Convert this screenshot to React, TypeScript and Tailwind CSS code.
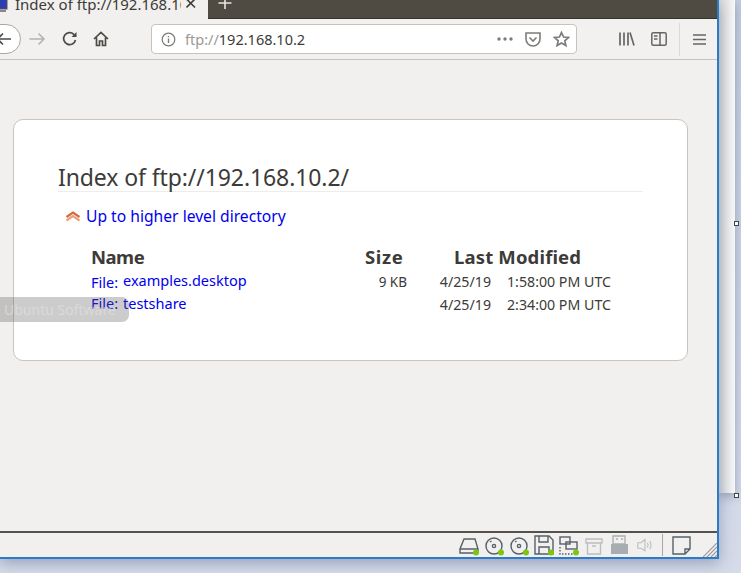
import React from "react";

function Dot() {
  return <circle cx="17" cy="17.5" r="3" fill="#7ec510" stroke="none" />;
}

function Status({ children, w = 20, className = "" }: { children: React.ReactNode; w?: number; className?: string }) {
  return (
    <svg width={w} height="21" viewBox="0 0 20 21" fill="none" stroke="#56606a" strokeWidth="1.4" className={`shrink-0 ${className}`}>
      {children}
    </svg>
  );
}

function Row({ name, size, date, time, fileClass }: { name: string; size: string; date: string; time: string; fileClass: string }) {
  return (
    <div className="flex items-start h-[23px] text-[14.2px] leading-[20px]">
      <div className="w-[281px] text-[#0000ee] flex shrink-0">
        <span className={`text-[14.5px] leading-[20px] w-[32px] shrink-0 ${fileClass}`}>File:</span>
        <span className="-mt-[2px] text-[14.5px]">{name}</span>
      </div>
      <div className="w-[35px] text-right text-[#3c3b37] text-[13.5px] shrink-0">{size}</div>
      <div className="w-[84px] text-right text-[#3c3b37] shrink-0">{date}</div>
      <div className="ml-[16px] text-[#3c3b37] whitespace-nowrap">{time}</div>
    </div>
  );
}

export default function App() {
  return (
    <div className="relative w-[741px] h-[573px] overflow-hidden flex items-start bg-gradient-to-b from-[#c2cce0] to-[#d5dbe9] font-['Noto_Sans','Open_Sans',sans-serif]">
      {/* Browser window */}
      <div className="relative z-10 w-[719px] h-[559px] shrink-0 flex flex-col border-r-2 border-b-2 border-[#2a7bc8] shadow-[0_4px_14px_rgba(70,90,130,0.45)]">
        {/* Tab strip */}
        <div className="h-[19px] shrink-0 flex bg-[#4f4b43] border-b border-[#33312c]">
          <div className="w-[208px] h-[19px] shrink-0 bg-[#f1f0ee] flex items-end overflow-hidden relative">
            <svg width="9" height="14" viewBox="0 0 9 14" className="absolute left-0 top-0">
              <rect x="-6" y="-2" width="13" height="11" fill="#2d3fb0" stroke="#555" />
              <rect x="0" y="10" width="6" height="2" fill="#888" />
            </svg>
            <span className="absolute left-[15px] -top-[8px] text-[15px] leading-[24px] text-[#3c3b37] whitespace-nowrap w-[166px] overflow-hidden">Index of ftp://192.168.10.2</span>
            <svg width="10" height="10" viewBox="0 0 10 10" className="absolute left-[186px] top-0" stroke="#3c3b37" strokeWidth="1.6">
              <path d="M0.5 -1 L9 7.5 M9 -1 L0.5 7.5" />
            </svg>
          </div>
          <svg width="14" height="14" viewBox="0 0 14 14" className="ml-[10px]" stroke="#e8e6e1" strokeWidth="1.6">
            <path d="M7 -4 V9 M0.5 3 H13.5" />
          </svg>
        </div>

        {/* Toolbar */}
        <div className="h-[41px] shrink-0 bg-[#f2f1ef] border-b border-[#c6c3be] flex items-center relative">
          <div className="w-[42px] h-[30px] -ml-[21px] shrink-0 rounded-full bg-white border border-[#a9a7a2] flex items-center justify-end pr-[8px]">
            <svg width="16" height="14" viewBox="0 0 16 14" fill="none" stroke="#4c4b48" strokeWidth="1.6">
              <path d="M15 7 H1.5 M7 1.5 L1.5 7 L7 12.5" />
            </svg>
          </div>
          <svg width="17" height="14" viewBox="0 0 17 14" fill="none" stroke="#b5b3af" strokeWidth="1.6" className="ml-[8px] shrink-0">
            <path d="M0.5 7 H15 M9.5 1.5 L15 7 L9.5 12.5" />
          </svg>
          <svg width="16" height="16" viewBox="0 0 16 16" fill="none" stroke="#4c4b48" strokeWidth="1.7" className="ml-[16px] shrink-0">
            <path d="M13.5 9 A6 6 0 1 1 11.8 3.3 L14 5.2" />
            <path d="M14.5 1 V6 H9.5" fill="#4c4b48" stroke="none" />
          </svg>
          <svg width="16" height="16" viewBox="0 0 16 16" fill="none" stroke="#4c4b48" strokeWidth="1.7" className="ml-[15px] shrink-0">
            <path d="M1 8 L8 1.5 L15 8 M3.5 6.5 V14.5 H6.5 V10 H9.5 V14.5 H12.5 V6.5" />
          </svg>
          {/* URL bar */}
          <div className="ml-[42px] w-[426px] h-[30px] shrink-0 bg-white border border-[#c6c3be] rounded-[4px] flex items-center">
            <svg width="15" height="15" viewBox="0 0 15 15" fill="none" stroke="#7d7c79" className="ml-[9px] shrink-0">
              <circle cx="7.5" cy="7.5" r="6.3" strokeWidth="1.2" />
              <path d="M7.5 6.5 V11 M7.5 4 V5.2" strokeWidth="1.4" />
            </svg>
            <span className="ml-[9px] text-[14.5px] leading-[20px] text-[#9a9995] whitespace-nowrap">ftp://<span className="text-[#3c3b37]">192.168.10.2</span></span>
            <div className="flex-1" />
            <svg width="16" height="4" viewBox="0 0 16 4" fill="#7d7c79" className="shrink-0">
              <circle cx="2" cy="2" r="1.7" /><circle cx="8" cy="2" r="1.7" /><circle cx="14" cy="2" r="1.7" />
            </svg>
            <svg width="16" height="15" viewBox="0 0 16 15" fill="none" stroke="#7d7c79" strokeWidth="1.6" className="ml-[12px] shrink-0">
              <path d="M1 1 H15 V7 A7 7 0 0 1 1 7 Z M4.5 5.5 L8 9 L11.5 5.5" />
            </svg>
            <svg width="17" height="16" viewBox="0 0 17 16" fill="none" stroke="#7d7c79" strokeWidth="1.7" className="ml-[12px] mr-[6px] shrink-0">
              <path d="M8.5 1.5 L10.6 6 L15.5 6.5 L11.8 9.8 L12.9 14.6 L8.5 12.1 L4.1 14.6 L5.2 9.8 L1.5 6.5 L6.4 6 Z" />
            </svg>
          </div>
          <svg width="16" height="14" viewBox="0 0 16 14" fill="none" stroke="#666" strokeWidth="1.7" className="ml-[42px] shrink-0">
            <path d="M1 0.5 V13.5 M5 0.5 V13.5 M9 0.5 V13.5 M11 0.5 L15 13.5" />
          </svg>
          <svg width="16" height="14" viewBox="0 0 16 14" fill="none" stroke="#666" strokeWidth="1.5" className="ml-[16px] shrink-0">
            <rect x="0.8" y="0.8" width="14.4" height="12.4" rx="1.5" />
            <path d="M9 1 V13 M3 4 H6.5 M3 7 H6.5" />
          </svg>
          <div className="w-px h-[33px] bg-[#dcdad6] ml-[12px] shrink-0" />
          <svg width="13" height="11" viewBox="0 0 13 11" stroke="#666" strokeWidth="1.6" className="ml-[13px] shrink-0">
            <path d="M0 1 H13 M0 5.5 H13 M0 10 H13" />
          </svg>
        </div>

        {/* Page */}
        <div className="flex-1 min-h-0 bg-[#f1f0ee] pl-[13px] pt-[59px] border-b-2 border-[#53524f]">
          <div className="w-[675px] h-[242px] bg-white border border-[#c7c5c1] rounded-[10px] pl-[44px] pt-[40px]">
            <h1 className="w-[585px] h-[32px] border-b border-[#eeedeb] text-[23px] leading-[34px] text-[#3c3b37] tracking-[-0.1px] whitespace-nowrap">Index of ftp://192.168.10.2/</h1>
            <div className="flex items-center ml-[7px] mt-[13px] h-[22px]">
              <svg width="16" height="11" viewBox="0 0 16 11" fill="none" stroke="#d9693a" strokeWidth="2.2" className="shrink-0">
                <path d="M1.5 9.5 L8 5 L14.5 9.5" stroke="#e9a27e" />
                <path d="M1.5 6 L8 1.5 L14.5 6" />
              </svg>
              <span className="ml-[5px] text-[15.65px] leading-[22px] text-[#0000ee] whitespace-nowrap">Up to higher level directory</span>
            </div>
            <div className="ml-[33px] mt-[18px]">
              <div className="flex items-center h-[24px] text-[18.5px] leading-[24px] font-bold text-[#3c3b37] whitespace-nowrap">
                <div className="w-[274px] shrink-0 tracking-[-0.5px]">Name</div>
                <div className="w-[89px] shrink-0 tracking-[0.6px]">Size</div>
                <div className="tracking-[0.15px]">Last Modified</div>
              </div>
              <div className="mt-[3px]">
                <Row name="examples.desktop" size="9 KB" date="4/25/19" time="1:58:00 PM UTC" fileClass="mt-0" />
                <Row name="testshare" size="" date="4/25/19" time="2:34:00 PM UTC" fileClass="-mt-[2px]" />
              </div>
            </div>
          </div>
        </div>

        {/* Status bar */}
        <div className="h-[24px] shrink-0 bg-[#f1f0ee] flex items-center justify-end relative pr-[26px] gap-[5px]">
          <Status>
            <path d="M5 4 H16 L19 14 V18 H1 V14 Z M1 14 H19" />
            <Dot />
          </Status>
          <Status>
            <circle cx="10" cy="11" r="8" />
            <circle cx="10" cy="11" r="1.6" />
            <path d="M6 7 L7.5 6" />
            <Dot />
          </Status>
          <Status>
            <circle cx="10" cy="11" r="8" />
            <circle cx="10" cy="11" r="1.6" />
            <path d="M6 7 L7.5 6" />
            <Dot />
          </Status>
          <Status>
            <path d="M1 1 H15 L19 5 V19 H1 Z M5 1 V7 H14 V1 M5 19 V12 H15 V19" />
            <Dot />
          </Status>
          <Status>
            <rect x="1" y="2" width="10" height="7" />
            <rect x="7" y="7" width="11" height="7" />
            <path d="M1 12 V19 H14" strokeDasharray="1.5 1.5" />
            <Dot />
          </Status>
          <Status>
            <path d="M2 4 H18 V8 H2 Z M3.5 8 V19 H16.5 V8 M8 11 H12" stroke="#bcbdbf" />
          </Status>
          <svg width="19" height="20" viewBox="0 0 19 20" className="shrink-0 ml-[1px]">
            <path d="M3 1 H15 V9 H3 Z" fill="none" stroke="#a8adb2" strokeWidth="1.3" />
            <path d="M1 9 H18 V19 H1 Z" fill="#a8adb2" />
            <path d="M6 4 H8 M11 4 H13" stroke="#a8adb2" strokeWidth="1.3" />
          </svg>
          <Status w={16} className="ml-[3px]">
            <path d="M1 7 H5 L10 3 V17 L5 14 H1 Z" stroke="#bcbdbf" />
            <path d="M13 7 Q15 10 13 13 M16 5 Q19 10 16 15" stroke="#bcbdbf" />
          </Status>
          <div className="w-px h-[22px] bg-[#a6a6a6] ml-[4px] mr-[4px] shrink-0" />
          <svg width="19" height="19" viewBox="0 0 19 19" fill="none" stroke="#56606a" strokeWidth="1.4" className="shrink-0">
            <path d="M1 1 H18 V13 L13 18 H1 Z M18 13 H13 V18" />
          </svg>
          <svg width="14" height="14" viewBox="0 0 14 14" stroke="#9c9c9c" strokeWidth="1.2" className="absolute right-0 bottom-0">
            <path d="M0 14 L14 0 M4 14 L14 4 M8 14 L14 8 M12 14 L14 12" />
          </svg>
        </div>
      </div>

      {/* Side strip behind the window */}
      <div className="w-[16px] h-[493px] shrink-0 bg-gradient-to-r from-[#d8d8d8] to-[#f8f8f8] shadow-[0_4px_10px_rgba(70,90,130,0.4)]" />

      {/* Window resize handles */}
      <div className="absolute z-20 left-[734px] top-[221px] w-[5px] h-[5px] bg-white border border-[#444]" />
      <div className="absolute z-20 left-[734px] top-[493px] w-[5px] h-[5px] bg-white border border-[#444]" />

      {/* Tooltip fragment */}
      <div className="absolute z-20 left-0 top-[297px] w-[129px] h-[25px] rounded-r-[7px] bg-[#555]/30 text-[#e0e0e0]/70 text-[14px] leading-[25px] pl-[4px] whitespace-nowrap overflow-hidden">Ubuntu Software</div>
    </div>
  );
}
